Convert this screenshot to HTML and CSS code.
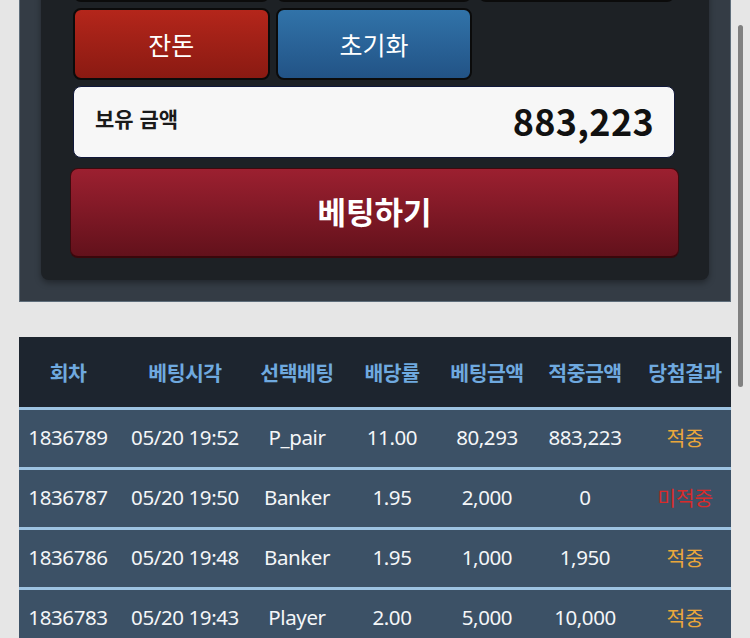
FILE: index.html
```html
<!DOCTYPE html>
<html lang="ko">
<head>
<meta charset="utf-8">
<link rel="stylesheet" href="styles.css">
</head>
<body>
<div class="page">
  <section class="outer">
    <div class="inner">
      <div class="btn-grid">
        <div class="btn btn-dark"></div>
        <div class="btn btn-dark"></div>
        <div class="btn btn-dark"></div>
        <button class="btn btn-red">잔돈</button>
        <button class="btn btn-blue">초기화</button>
      </div>
      <div class="balance">
        <span class="balance-label">보유 금액</span>
        <span class="balance-value">883,223</span>
      </div>
      <button class="bet-btn">베팅하기</button>
    </div>
  </section>

  <table class="history">
    <colgroup>
      <col class="c1"><col class="c2"><col class="c3"><col class="c4"><col class="c5"><col class="c6"><col class="c7">
    </colgroup>
    <thead>
      <tr><th>회차</th><th>베팅시각</th><th>선택베팅</th><th>배당률</th><th>베팅금액</th><th>적중금액</th><th>당첨결과</th></tr>
    </thead>
    <tbody>
      <tr><td>1836789</td><td>05/20 19:52</td><td>P_pair</td><td>11.00</td><td>80,293</td><td>883,223</td><td class="win">적중</td></tr>
      <tr><td>1836787</td><td>05/20 19:50</td><td>Banker</td><td>1.95</td><td>2,000</td><td>0</td><td class="lose">미적중</td></tr>
      <tr><td>1836786</td><td>05/20 19:48</td><td>Banker</td><td>1.95</td><td>1,000</td><td>1,950</td><td class="win">적중</td></tr>
      <tr><td>1836783</td><td>05/20 19:43</td><td>Player</td><td>2.00</td><td>5,000</td><td>10,000</td><td class="win">적중</td></tr>
    </tbody>
  </table>
</div>
<div class="scroll-thumb"></div>
</body>
</html>
```

FILE: styles.css
```css
html, body {
  margin: 0;
  padding: 0;
  background: #e6e6e6;
  font-family: "Noto Sans CJK KR", "Noto Sans", sans-serif;
  overflow: hidden;
  height: 638px;
}

.page {
  margin-top: -91px;
  padding: 0 19px 40px 19px;
}

.outer {
  background: #343c45;
  border: 1px solid #5e6d7a;
  padding: 0 21px 21px 21px;
}

.inner {
  background: #1d2125;
  border-radius: 8px;
  padding: 20px 34px 22px 32px;
  box-shadow: 0 3px 6px rgba(0, 0, 0, 0.35);
}

.btn-grid {
  display: grid;
  grid-template-columns: repeat(3, 1fr);
  gap: 6px;
}

.btn {
  box-sizing: border-box;
  height: 72px;
  border: 2px solid #0b0b0b;
  border-radius: 8px;
  color: #ffffff;
  font-family: "Noto Sans CJK KR", sans-serif;
  font-size: 25px;
  padding: 0;
}

.btn-dark {
  background: #22272c;
}

.btn-red {
  background: linear-gradient(#b4261b, #8a1a12);
}

.btn-blue {
  background: linear-gradient(#3173a9, #225386);
}

.balance {
  margin-top: 6px;
  height: 72px;
  box-sizing: border-box;
  background: #f7f7f7;
  border: 1px solid #10183a;
  border-radius: 8px;
  display: flex;
  align-items: center;
  justify-content: space-between;
  padding: 0 20px 0 21px;
}

.balance-label {
  font-size: 21px;
  font-weight: 700;
  color: #1a1a1a;
  margin-top: -8px;
}

.balance-value {
  font-size: 36px;
  font-weight: 700;
  color: #111111;
  letter-spacing: 0.3px;
  margin-top: -4px;
}

.bet-btn {
  display: block;
  margin: 10px -4px 0 -3px;
  width: calc(100% + 7px);
  height: 90px;
  border: 1px solid #3d0a0e;
  border-bottom: 2px solid #3a070b;
  border-radius: 8px;
  background: linear-gradient(#9c2030, #62111b);
  color: #ffffff;
  font-family: "Noto Sans CJK KR", sans-serif;
  font-size: 31px;
  font-weight: 700;
  padding: 0 0 4px 0;
}

.history {
  margin-top: 35px;
  width: 100%;
  border-collapse: collapse;
  table-layout: fixed;
}

.c1 { width: 98px; }
.c2 { width: 136px; }
.c3 { width: 88px; }
.c4 { width: 102px; }
.c5 { width: 88px; }
.c6 { width: 108px; }
.c7 { width: 92px; }

.history th {
  background: #1d252f;
  color: #6fa9df;
  font-size: 20.5px;
  font-weight: 700;
  height: 70px;
  padding: 0;
  border-bottom: 3px solid #9dc3e2;
  white-space: nowrap;
  letter-spacing: -0.5px;
}

.history td {
  background: #3c5166;
  color: #f4f6f8;
  font-family: "Noto Sans", "Noto Sans CJK KR", sans-serif;
  font-size: 20.5px;
  font-weight: 400;
  text-align: center;
  height: 60px;
  padding: 0 0 4px 0;
  box-sizing: border-box;
  border-bottom: 3px solid #9dc3e2;
  white-space: nowrap;
  letter-spacing: -0.4px;
}

.history td.win {
  color: #eaa73b;
}

.history td.lose {
  color: #d82b2b;
}

.scroll-thumb {
  position: absolute;
  left: 738px;
  top: 25px;
  width: 5px;
  height: 362px;
  border-radius: 3px;
  background: #808080;
}
```
